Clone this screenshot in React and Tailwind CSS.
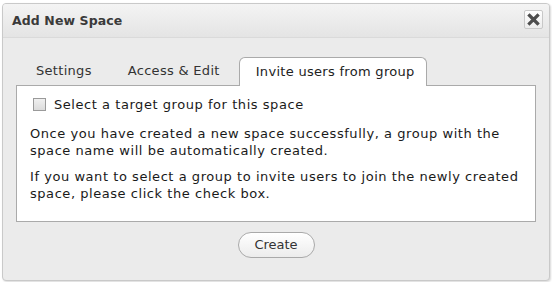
import React from 'react';

function CloseIcon() {
  return (
    <svg width="13" height="13" viewBox="0 0 13 13">
      <path d="M2.5 2.5 L10.5 10.5 M10.5 2.5 L2.5 10.5" stroke="#4d4d4d" strokeWidth="3.2" strokeLinecap="square" />
    </svg>
  );
}

export default function App() {
  const tabs = ['Settings', 'Access & Edit', 'Invite users from group'];
  const active = 2;

  return (
    <div className="w-[552px] h-[282px] bg-white pt-[3px] pl-[2px] font-['DejaVu_Sans',sans-serif]">
      <div className="w-[548px] h-[278px] rounded-[4px] border border-[#c9c9c9] bg-[#ebebeb] shadow-[1px_1px_2px_rgba(0,0,0,0.15)] flex flex-col overflow-hidden">
        {/* header */}
        <div className="h-[34px] flex items-start justify-between bg-gradient-to-b from-[#f4f4f4] to-[#e4e4e4] border-b border-[#dadada]">
          <h1 className="pl-[9px] pt-[9px] text-[12.5px] tracking-[0.1px] font-bold text-[#3a3a3a] leading-[16px]">Add New Space</h1>
          <button className="mt-[6px] mr-[6px] w-[19px] h-[19px] flex items-center justify-center border border-[#c8c8c8] rounded-[2px] bg-gradient-to-b from-white to-[#ececec]">
            <CloseIcon />
          </button>
        </div>

        {/* body */}
        <div className="flex flex-col pt-[18px] px-[13px]">
          <div className="flex gap-[2px] pl-[3px]">
            {tabs.map((t, i) => (
              <div
                key={t}
                className={`h-[29px] flex items-center text-[13px] tracking-[0.3px] rounded-t-[6px] ${
                  i === active
                    ? 'pl-[16px] pr-[11px] bg-white border border-b-0 border-[#aaaaaa] text-[#222] relative top-[1px] z-10'
                    : 'px-[16px] text-[#333] border border-transparent'
                }`}
              >
                {t}
              </div>
            ))}
          </div>

          <div className="h-[137px] bg-white border border-[#aaaaaa] pt-[10px] px-[13px] text-[13px] leading-[17.5px] tracking-[0.55px] text-[#1a1a1a]">
            <label className="flex items-center gap-[8px]">
              <span className="ml-[3px] w-[13px] h-[13px] border border-[#9a9a9a] bg-gradient-to-b from-[#f0f0f0] to-[#dcdcdc]"></span>
              <span>Select a target group for this space</span>
            </label>
            <p className="mt-[11px]">
              Once you have created a new space successfully, a group with the space name will be automatically created.
            </p>
            <p className="mt-[8px]">
              If you want to select a group to invite users to join the newly created space, please click the check box.
            </p>
          </div>

          <div className="flex justify-center pt-[10px]">
            <button className="w-[77px] h-[26px] rounded-full border border-[#a9a9a9] bg-gradient-to-b from-white to-[#ececec] text-[13px] text-[#333]">
              Create
            </button>
          </div>
        </div>
      </div>
    </div>
  );
}
